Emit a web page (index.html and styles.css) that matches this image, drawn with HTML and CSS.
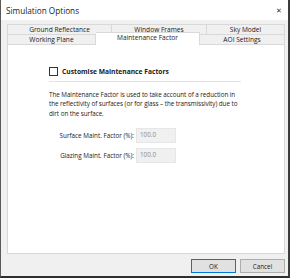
FILE: index.html
```html
<!DOCTYPE html>
<html lang="en">
<head>
  <meta charset="UTF-8" />
  <title>Simulation Options</title>
  <link rel="stylesheet" href="styles.css">
</head>
<body>
  <div class="window">
    <div class="titlebar">
      <span class="title">Simulation Options</span>
      <span class="close">&#x2715;</span>
    </div>
    <div class="body">
      <div class="tabs">
        <div class="tabrow">
          <div class="tab" style="width:105px">Ground Reflectance</div>
          <div class="tab" style="width:95px">Window Frames</div>
          <div class="tab" style="flex:1">Sky Model</div>
        </div>
        <div class="tabrow">
          <div class="tab" style="width:89px">Working Plane</div>
          <div class="tab active" style="width:104px">Maintenance Factor</div>
          <div class="tab" style="flex:1">AOI Settings</div>
        </div>
      </div>
      <div class="panel">
        <div class="check-row">
          <span class="checkbox"></span>
          <span class="check-label">Customise Maintenance Factors</span>
        </div>
        <p class="desc">The Maintenance Factor is used to take account of a reduction in the reflectivity of surfaces (or for glass &ndash; the transmissivity) due to dirt on the surface.</p>
        <div class="field">
          <label>Surface Maint. Factor (%):</label>
          <span class="input">100.0</span>
        </div>
        <div class="field">
          <label>Glazing Maint. Factor (%):</label>
          <span class="input">100.0</span>
        </div>
      </div>
      <div class="buttons">
        <button class="btn default">OK</button>
        <button class="btn">Cancel</button>
      </div>
    </div>
  </div>
</body>
</html>
```

FILE: styles.css
```css
body {
  margin: 0;
  font-family: "Open Sans", "Noto Sans", sans-serif;
  color: #1a1a1a;
}
.window {
  width: 290px;
  height: 278px;
  box-sizing: border-box;
  border-left: 1px solid #5a5a5a;
  border-right: 2px solid #3c3c3c;
  border-bottom: 2px solid #2e2e2e;
  display: flex;
  flex-direction: column;
  background: #f0f0f0;
}
.titlebar {
  height: 20px;
  background: #fff;
  display: flex;
  align-items: center;
  justify-content: space-between;
  padding: 0 6px 0 5px;
}
.title {
  font-size: 8.2px;
  color: #222;
}
.close {
  font-size: 7px;
  color: #333;
}
.body {
  flex: 1;
  display: flex;
  flex-direction: column;
  padding: 4px 3px 0 6px;
}
.tabs {
  display: flex;
  flex-direction: column;
}
.tabrow {
  display: flex;
  height: 10px;
}
.tab {
  box-sizing: border-box;
  border: 1px solid #d9d9d9;
  border-bottom: none;
  border-left: none;
  background: #f0f0f0;
  font-size: 6.6px;
  text-align: center;
  line-height: 9px;
  white-space: nowrap;
}
.tabrow .tab:first-child {
  border-left: 1px solid #d9d9d9;
}
.tab.active {
  background: #fff;
  margin-top: -2px;
  height: 13px;
  position: relative;
  z-index: 1;
  line-height: 10px;
}
.panel {
  height: 210px;
  box-sizing: border-box;
  background: #fff;
  border: 1px solid #d9d9d9;
  padding: 22px 38px 0 41px;
}
.check-row {
  display: flex;
  align-items: center;
  gap: 4px;
  padding-bottom: 5px;
  margin-right: 5px;
  border-bottom: 1px solid #e3e3e3;
}
.checkbox {
  width: 7px;
  height: 7px;
  border: 1px solid #333;
  background: #fff;
}
.check-label {
  font-size: 6.7px;
  font-weight: bold;
}
.desc {
  font-size: 6.3px;
  line-height: 9.3px;
  letter-spacing: -0.05px;
  margin: 8px 0 10px;
}
.field {
  display: flex;
  align-items: center;
  justify-content: flex-start;
  height: 15px;
  margin-bottom: 5px;
}
.field label {
  width: 85px;
  text-align: right;
  font-size: 6.3px;
  padding-right: 2px;
}
.input {
  width: 40px;
  height: 15px;
  box-sizing: border-box;
  background: #f0f0f0;
  border: 1px solid #e6e6e6;
  font-size: 6.3px;
  color: #8a8a8a;
  padding: 1px 0 0 3px;
  align-self: flex-start;
}
.buttons {
  display: flex;
  justify-content: flex-end;
  gap: 4px;
  margin-top: 5px;
}
.btn {
  width: 45px;
  height: 14px;
  padding: 0;
  font-family: inherit;
  font-size: 6.3px;
  background: #e1e1e1;
  border: 1px solid #adadad;
  color: #1a1a1a;
}
.btn.default {
  border-color: #0078d7;
}
```
